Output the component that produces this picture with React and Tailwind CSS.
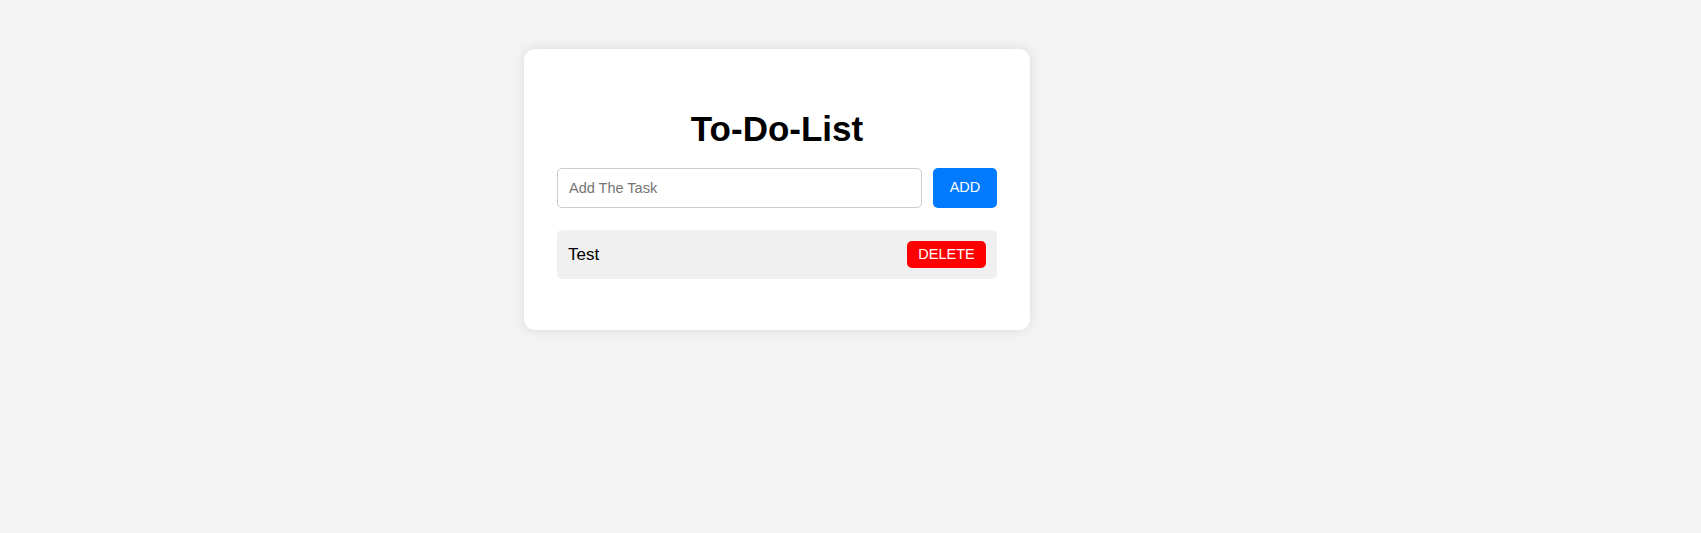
import { useState } from "react";

export default function App() {
  const [tasks, setTasks] = useState(["Test"]);
  const [text, setText] = useState("");

  const addTask = () => {
    if (!text.trim()) return;
    setTasks([...tasks, text.trim()]);
    setText("");
  };

  return (
    <div className="min-h-screen bg-[#f3f3f3] pt-[49px] pl-[524px] font-['Liberation_Sans',Arial,sans-serif]">
      <div className="w-[506px] h-[281px] bg-white rounded-[11px] shadow-[0_0_11px_rgba(0,0,0,0.1)] px-[33px] pt-[60px]">
        <h1 className="text-[35px] leading-[40px] font-bold text-center text-black">To-Do-List</h1>

        {/* input row */}
        <div className="mt-[19px] flex gap-[11px] h-[40px]">
          <input
            type="text"
            value={text}
            onChange={(e) => setText(e.target.value)}
            placeholder="Add The Task"
            className="w-[365px] h-full border border-[#ccc] rounded-[5px] px-[11px] text-[14.5px] text-black outline-none placeholder:text-[#757575]"
          />
          <button
            onClick={addTask}
            className="w-[64px] h-full bg-[#007bff] text-white rounded-[5px] text-[14.5px]"
          >
            ADD
          </button>
        </div>

        {/* task list */}
        <ul className="mt-[22px] flex flex-col gap-[10px]">
          {tasks.map((t, i) => (
            <li
              key={i}
              className="h-[49px] bg-[#f0f0f0] rounded-[5px] flex items-center justify-between pl-[11px] pr-[11px]"
            >
              <span className="text-[17px] text-black">{t}</span>
              <button
                onClick={() => setTasks(tasks.filter((_, j) => j !== i))}
                className="w-[79px] h-[27px] pt-px bg-[#ff0000] text-white rounded-[5px] text-[14.5px]"
              >
                DELETE
              </button>
            </li>
          ))}
        </ul>
      </div>
    </div>
  );
}
